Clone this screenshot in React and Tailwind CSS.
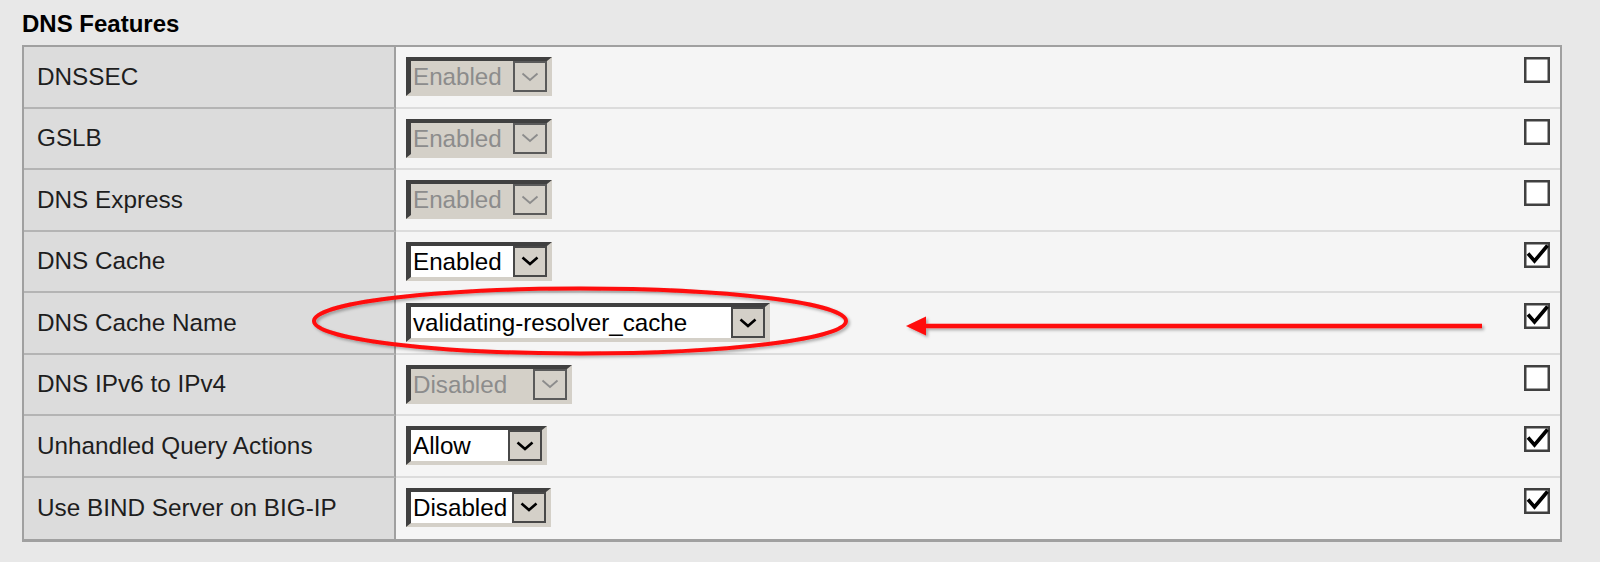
const rows = [
  { label: "DNSSEC", value: "Enabled", w: "w-[146px]", disabled: true, checked: false },
  { label: "GSLB", value: "Enabled", w: "w-[146px]", disabled: true, checked: false },
  { label: "DNS Express", value: "Enabled", w: "w-[146px]", disabled: true, checked: false },
  { label: "DNS Cache", value: "Enabled", w: "w-[146px]", disabled: false, checked: true },
  { label: "DNS Cache Name", value: "validating-resolver_cache", w: "w-[364px]", disabled: false, checked: true },
  { label: "DNS IPv6 to IPv4", value: "Disabled", w: "w-[166px]", disabled: true, checked: false },
  { label: "Unhandled Query Actions", value: "Allow", w: "w-[141px]", disabled: false, checked: true },
  { label: "Use BIND Server on BIG-IP", value: "Disabled", w: "w-[145px]", disabled: false, checked: true },
];

function Select({ value, w, disabled }) {
  return (
    <div
      className={`${w} h-[39px] flex border-t-4 border-l-[5px] border-r-[5px] border-b-4 border-t-[#404040] border-l-[#404040] border-r-[#d4d0c8] border-b-[#d4d0c8] ${
        disabled ? "bg-[#d4d0c8]" : "bg-white"
      }`}
    >
      <div
        className={`flex-1 pl-[2px] leading-[31px] text-[24.2px] whitespace-nowrap overflow-hidden ${
          disabled ? "text-[#8c8c8c]" : "text-black"
        }`}
      >
        {value}
      </div>
      <div
        className={`w-[34px] h-full border-2 bg-[#d4d0c8] flex items-center justify-center ${
          disabled ? "border-[#5a5a5a]" : "border-[#484848]"
        }`}
      >
        <svg width="18" height="10" viewBox="0 0 18 10">
          <polyline
            points="1.5,1.5 9,8 16.5,1.5"
            fill="none"
            stroke={disabled ? "#8c8c8c" : "#000"}
            strokeWidth={disabled ? 1.8 : 2.6}
          />
        </svg>
      </div>
    </div>
  );
}

function Checkbox({ checked }) {
  return (
    <svg width="26" height="26" viewBox="0 0 26 26" className="shrink-0">
      <rect x="1.25" y="1.25" width="23.5" height="23.5" fill="#fff" stroke="#404040" strokeWidth="2.5" />
      {checked && (
        <polyline
          points="4,11.5 10.5,19 23.5,3.5"
          fill="none"
          stroke="#000"
          strokeWidth="3.6"
          strokeLinejoin="miter"
        />
      )}
    </svg>
  );
}

export default function App() {
  return (
    <div className="relative h-[562px] w-[1600px] bg-[#e8e8e8] pl-[22px] pt-[10px] text-[24.3px] text-[#1e1e1e] font-['Liberation_Sans',Arial,sans-serif]">
      {/* Section title */}
      <div className="h-[35px] leading-[27px] text-[24px] font-bold text-black">DNS Features</div>

      {/* Features table */}
      <div className="w-[1540px] border-t-2 border-l-2 border-r-2 border-b-[3px] border-[#a0a0a0]">
        {rows.map((r, i) => {
          const last = i === rows.length - 1;
          return (
            <div key={r.label} className="flex h-[61.5px]">
              <div
                className={`w-[372px] shrink-0 flex items-center pl-[13px] bg-[#dcdcdc] border-r-2 border-r-[#a0a0a0] ${
                  last ? "" : "border-b-2 border-b-[#b4b4b4]"
                }`}
              >
                {r.label}
              </div>
              <div
                className={`flex-1 flex items-start justify-between pt-[10px] pl-[10px] pr-[10px] bg-[#f5f5f5] ${
                  last ? "" : "border-b-2 border-b-[#dcdcdc]"
                }`}
              >
                <Select value={r.value} w={r.w} disabled={r.disabled} />
                <Checkbox checked={r.checked} />
              </div>
            </div>
          );
        })}
      </div>

      {/* Annotation overlay */}
      <svg className="absolute top-0 left-0 pointer-events-none" width="1600" height="562">
        <defs>
          <filter id="sh" x="-10%" y="-50%" width="120%" height="200%">
            <feDropShadow dx="2" dy="2" stdDeviation="1.5" floodColor="#000" floodOpacity="0.3" />
          </filter>
        </defs>
        <g filter="url(#sh)">
          <ellipse cx="580" cy="321" rx="266" ry="32.5" fill="none" stroke="#ff0a0a" strokeWidth="4" />
          <line x1="922" y1="326" x2="1482" y2="326" stroke="#ff0a0a" strokeWidth="4.6" />
          <polygon points="906,326 926,316.5 926,335.5" fill="#ff0a0a" />
        </g>
      </svg>
    </div>
  );
}
